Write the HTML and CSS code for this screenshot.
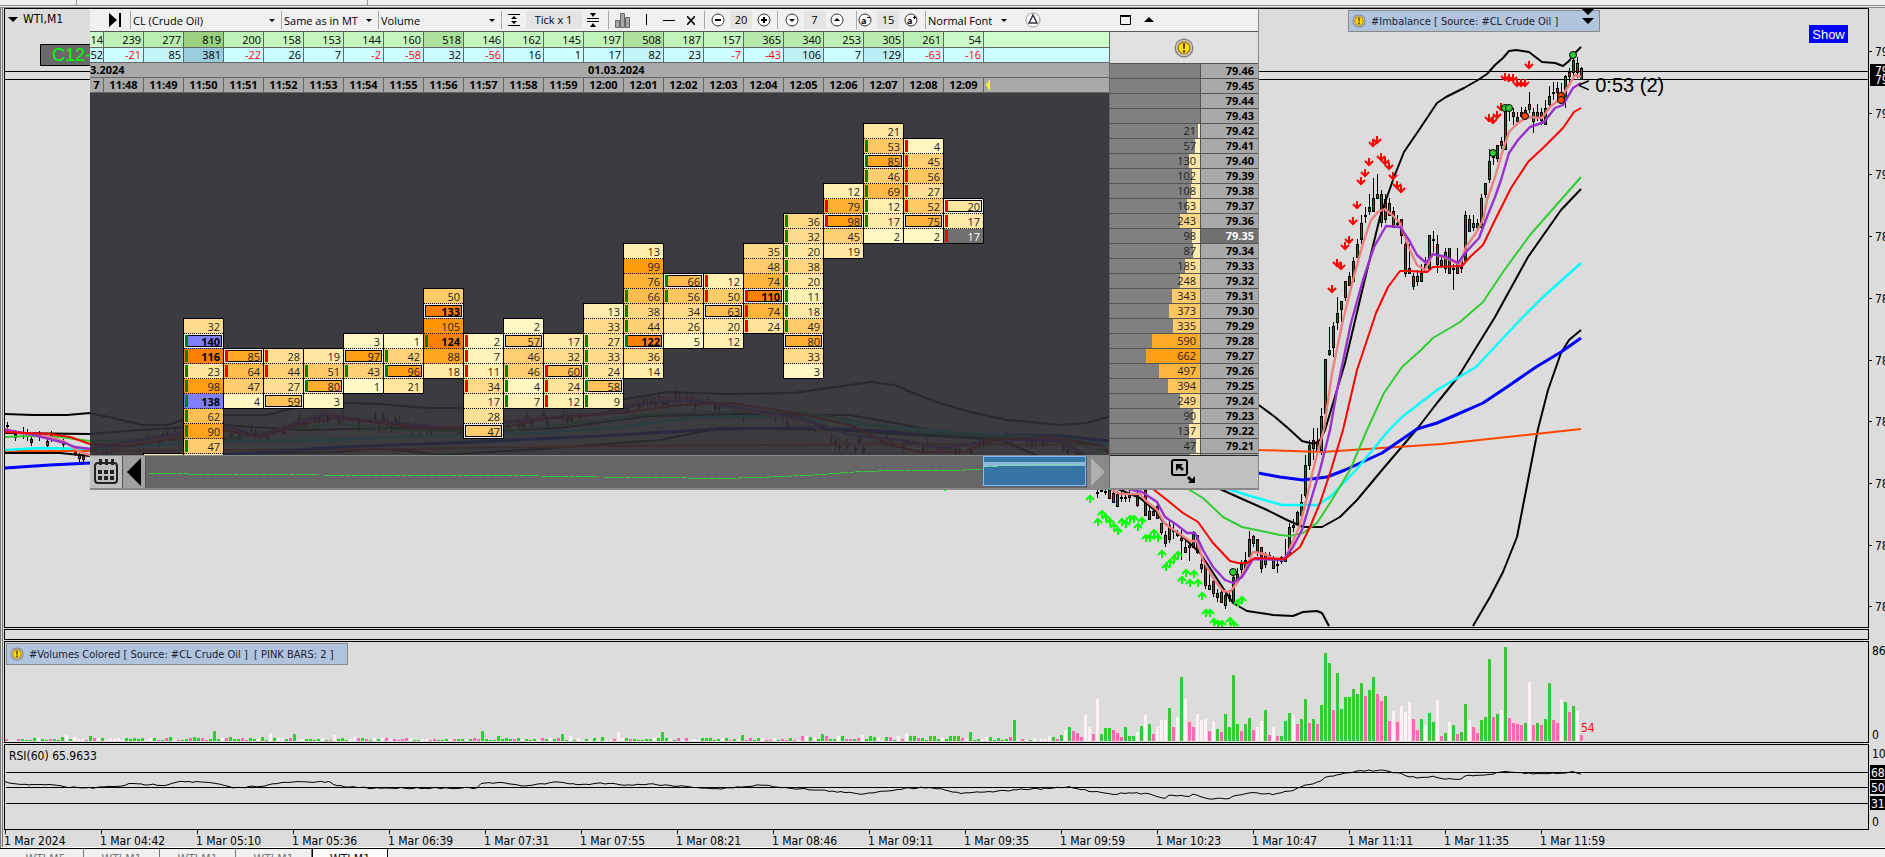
FILE: index.html
```
<!DOCTYPE html>
<html lang="en">
<head>
    <meta charset="UTF-8">
    <meta name="viewport" content="width=device-width, initial-scale=1.0">
    <title>WTI,M1</title>
    <link rel="stylesheet" href="styles.css">
</head>
<body>
    <svg class="defs" width="0" height="0" aria-hidden="true">
        <symbol id="warn" viewBox="0 0 18 18">
            <circle cx="9" cy="9" r="8.5" fill="#808080"/>
            <circle cx="9" cy="9" r="7.2" fill="#d8d8d8"/>
            <circle cx="9" cy="9" r="5.4" fill="#ffe000" stroke="#b08020" stroke-width="1.500"/>
            <path d="M8 5h2l-.4 5H8.400zM8 11h2v2H8z" fill="#403000"/>
        </symbol>
    </svg>

    <div class="topbar"><i></i><i></i></div>

    <main class="workspace">
        <section class="row row-main">
            <div class="plot" id="mainPlot">
                <svg class="layer"><g id="price" transform="translate(-5 -9)"></g></svg>

                <div class="symbol"><span class="tri-down"></span>WTI,M1</div>
                <button class="contract">C12-</button>

                <div class="tag tag-imbalance"><svg width="14" height="14"><use href="#warn"/></svg>#Imbalance [ Source: #CL Crude Oil ]</div>
                <svg class="marks" width="12" height="16"><path d="M0 0h12l-6 6zM0 9h12l-6 6z"/></svg>
                <button class="show">Show</button>
                <div class="countdown">&lt; 0:53 (2)</div>

                <div class="cluster">
                    <div class="toolbar">
                        <div class="group g-next">
                            <button aria-label="Go to last"><svg width="14" height="14"><path d="M1 0l8 7-8 7zM11 0h2v14h-2z"/></svg></button>
                        </div>
                        <div class="group g-symbol"><select aria-label="Instrument"><option>CL (Crude Oil)</option></select></div>
                        <div class="group g-period"><select aria-label="Period"><option>Same as in MT</option></select></div>
                        <div class="group g-mode"><select aria-label="Mode"><option>Volume</option></select></div>
                        <div class="group g-tick">
                            <button aria-label="Expand rows"><svg width="12" height="14"><path d="M0 1h12v1H0zM0 12h12v1H0zM6 3l3 3H3zM6 11l3-3H3z"/></svg></button>
                            <span class="value wide">Tick x 1</span>
                            <button aria-label="Collapse rows"><svg width="12" height="14"><path d="M0 5h12v1H0zM0 8h12v1H0zM3 0h6l-3 4zM3 14h6l-3-4z"/></svg></button>
                        </div>
                        <div class="group g-draw">
                            <button aria-label="Histogram"><svg width="16" height="15"><path d="M.5 7.500h4v7h-4zM5.500.5h4v14h-4zM10.500 4.500h4v10h-4z" fill="#a8a8a8" stroke="#666"/></svg></button>
                            <button aria-label="Vertical line"><svg width="8" height="12"><path d="M3 0h1v11H3z"/></svg></button>
                            <button aria-label="Horizontal line"><svg width="12" height="12"><path d="M0 6h12v1H0z"/></svg></button>
                            <button aria-label="Clear"><svg width="8" height="9"><path d="M0 0l8 9M8 0L0 9" stroke="#000" stroke-width="1.500"/></svg></button>
                        </div>
                        <div class="group g-step">
                            <button aria-label="Less"><svg width="14" height="14"><circle class="ring" cx="7" cy="7" r="6"/><path d="M4 6h6v2H4z"/></svg></button>
                            <span class="value">20</span>
                            <button aria-label="More"><svg width="14" height="14"><circle class="ring" cx="7" cy="7" r="6"/><path d="M4 6h6v2H4zM6 4h2v6H6z"/></svg></button>
                        </div>
                        <div class="group g-step g-rows">
                            <button aria-label="Down"><svg width="14" height="14"><circle class="ring" cx="7" cy="7" r="6"/><path d="M4 6h6L7 9z"/></svg></button>
                            <span class="value">7</span>
                            <button aria-label="Up"><svg width="14" height="14"><circle class="ring" cx="7" cy="7" r="6"/><path d="M4 8h6L7 5z"/></svg></button>
                        </div>
                        <div class="group g-step g-size">
                            <button aria-label="Smaller font"><svg width="14" height="14"><circle class="ring" cx="7" cy="7" r="6"/><text x="3" y="11">a</text><path d="M9 4h3v1H9z"/></svg></button>
                            <span class="value">15</span>
                            <button aria-label="Larger font"><svg width="14" height="14"><circle class="ring" cx="7" cy="7" r="6"/><text x="3" y="11">a</text><path d="M9 4h3v1H9zM10 3h1v3h-1z"/></svg></button>
                        </div>
                        <div class="group g-font"><select aria-label="Font"><option>Normal Font</option></select></div>
                        <button class="delta" aria-label="Delta"><svg width="16" height="16"><circle cx="8" cy="8" r="7" fill="#fff" stroke="#999"/><path d="M8 3l4 8H4z" fill="none" stroke="#334" stroke-width="1.500"/></svg></button>
                        <div class="winctl">
                            <button aria-label="Maximize"><svg width="12" height="12"><path d="M.5 1.500h10v9H.5z" fill="none" stroke="#000"/><path d="M0 1h11v2H0z"/></svg></button>
                            <button aria-label="Roll up"><svg width="10" height="6"><path d="M0 5h10L5 0z"/></svg></button>
                        </div>
                    </div>

                    <div class="cluster-body">
                        <div class="cluster-left">
                            <table class="head" id="head"></table>
                            <div class="footprint" id="footprint"></div>
                            <div class="nav">
                                <button class="cal" aria-label="Calendar">
                                    <svg width="24" height="26">
                                        <rect x="1" y="4" width="22" height="20" rx="3" fill="none" stroke="#222" stroke-width="2"/>
                                        <path d="M5 0h3v6H5zM11 0h3v6h-3zM17 0h3v6h-3z" fill="#222"/>
                                        <path d="M4 11h4v4H4zM10 11h4v4h-4zM16 11h4v4h-4zM4 17h4v4H4zM10 17h4v4h-4zM16 17h4v4h-4z" fill="#222"/>
                                    </svg>
                                </button>
                                <button class="back" aria-label="Back"><svg width="14" height="28"><path d="M14 0v28L0 14z"/></svg></button>
                                <div class="track">
                                    <svg width="837" height="30"><path d="M3 17h30l10 1h70l60 1h120l100 1 60 1h70l40 2 60-2 45-2 40-3 50-2h60l24-1" fill="none" stroke="#32cd32" stroke-dasharray="6 1" shape-rendering="crispEdges"/></svg>
                                    <div class="thumb"><svg width="100" height="12"><path d="M0 4.500h14v-1h30v-1h50" fill="none" stroke="#6fe0b0" stroke-dasharray="6 1"/></svg></div>
                                </div>
                                <button class="fwd" aria-label="Forward"><svg width="14" height="28"><path d="M0 0v28l14-14z" fill="#b0b0b0"/></svg></button>
                            </div>
                        </div>
                        <div class="cluster-right">
                            <div class="status"><svg width="20" height="20"><use href="#warn"/></svg></div>
                            <div class="ladder-wrap"><table class="ladder" id="ladder"></table></div>
                            <button class="resize" aria-label="Resize">
                                <svg width="26" height="26">
                                    <rect x="1" y="1" width="15" height="15" rx="2" fill="none" stroke="#000" stroke-width="2"/>
                                    <path d="M5 5h7l-2 2 3 3-2 2-3-3-3 3zM24 24h-7l2-2-3-3 2-2 3 3 3-3z"/>
                                </svg>
                            </button>
                        </div>
                    </div>
                </div>
            </div>
            <div class="axis"><svg class="layer"><g id="priceAxis" transform="translate(-1869 -8)"></g></svg></div>
        </section>

        <section class="row row-strip"><div class="plot"></div><div class="axis"></div></section>

        <section class="row row-volume">
            <div class="plot">
                <svg class="layer"><g id="volume" transform="translate(-5 -641)"></g></svg>
                <div class="tag tag-volume"><svg width="14" height="14"><use href="#warn"/></svg>#Volumes Colored [ Source: #CL Crude Oil ]&nbsp; [ PINK BARS: 2 ]</div>
            </div>
            <div class="axis"><svg class="layer"><g id="volumeAxis" transform="translate(-1869 -640)"></g></svg></div>
        </section>

        <section class="row row-rsi">
            <div class="plot">
                <svg class="layer"><g id="rsi" transform="translate(-5 -744)"></g></svg>
                <div class="rsi-label">RSI(60) 65.9633</div>
            </div>
            <div class="axis"><svg class="layer"><g id="rsiAxis" transform="translate(-1869 -743)"></g></svg></div>
        </section>

        <div class="times" id="times"></div>
    </main>

    <nav class="tabs">
        <button>WTI,M5</button>
        <button>WTI,M1</button>
        <button>WTI,M1</button>
        <button>WTI,M1</button>
        <button class="active">WTI,M1</button>
    </nav>

    <script src="script.js"></script>
</body>
</html>
```
FILE: styles.css
```
* {
    margin: 0;
    padding: 0;
    box-sizing: border-box;
}

body {
    display: flex;
    flex-direction: column;
    height: 100vh;
    overflow: hidden;
    background: #dcdcdc;
    color: #000;
    font-family: "DejaVu Sans Condensed", "DejaVu Sans", Tahoma, sans-serif;
    font-size: 12px;
}

button,
select {
    border: 0;
    background: none;
    color: inherit;
    font: inherit;
}

button {
    display: flex;
    align-items: center;
    justify-content: center;
}

svg {
    display: block;
}

.defs {
    position: absolute;
}

.topbar {
    display: flex;
    gap: 290px;
    height: 8px;
    padding-left: 76px;
    background: #f0f0f0;
    border-bottom: 3px double #888;
}

.topbar i {
    width: 1px;
    background: #999;
}

.workspace {
    display: flex;
    flex: 1;
    flex-direction: column;
    gap: 1px;
    min-height: 0;
    padding-left: 1px;
    border-left: 3px double #777;
    border-bottom: 1px solid #fff;
}

.row {
    display: flex;
    background: #dcdcdc;
}

.row-main {
    flex: 1;
    min-height: 0;
}

.row-strip {
    height: 11px;
}

.row-volume {
    height: 102px;
}

.row-rsi {
    height: 86px;
}

.plot {
    position: relative;
    flex: 1;
    overflow: hidden;
    border: 1px solid #000;
}

.axis {
    position: relative;
    width: 16px;
    overflow: hidden;
}

.layer {
    position: absolute;
    inset: 0;
    width: 100%;
    height: 100%;
}

.layer text {
    font-size: 12px;
}

.symbol {
    display: flex;
    gap: 5px;
    align-items: center;
    padding: 3px;
    line-height: 15px;
}

.tri-down {
    border: 5px solid transparent;
    border-top-color: #000;
    border-bottom: 0;
}

.contract {
    position: absolute;
    top: 35px;
    left: 35px;
    width: 80px;
    height: 22px;
    justify-content: flex-start;
    padding-left: 11px;
    border: 1px solid #000;
    background: #696969;
    color: #0f0;
    font: 18px "Liberation Sans", Arial, sans-serif;
}

.tag {
    display: flex;
    gap: 5px;
    align-items: center;
    width: max-content;
    height: 22px;
    padding: 0 5px 0 3px;
    border: 1px solid #888;
    background: #b0c4de;
    color: #223;
    font-size: 11px;
    white-space: pre;
}

.tag-imbalance {
    position: absolute;
    top: 1px;
    left: 1343px;
    width: 252px;
}

.tag-volume {
    position: relative;
    margin: 1px;
    width: 342px;
}

.marks {
    position: absolute;
    top: 0;
    left: 1577px;
}

.show {
    position: absolute;
    top: 16px;
    right: 20px;
    width: 39px;
    height: 18px;
    background: #00f;
    color: #fff;
    font: 13px "Liberation Sans", Arial, sans-serif;
}

.countdown {
    position: absolute;
    top: 65px;
    left: 1573px;
    font: 20px/22px "Liberation Sans", Arial, sans-serif;
}

/* floating cluster window */
.cluster {
    position: absolute;
    top: 0;
    left: 85px;
    width: 1169px;
    border-right: 1px solid #888;
    border-bottom: 2px solid #888;
    font-family: "Open Sans", "Noto Sans", sans-serif;
    font-size: 11px;
}

.toolbar {
    display: flex;
    height: 23px;
    background: #f0f0f0;
    border-bottom: 1px solid #555;
}

.group {
    display: flex;
    align-items: center;
    justify-content: space-between;
    height: 18px;
    margin-top: 2px;
    padding: 0 6px;
    border-left: 1px solid #aaa;
}

.group select {
    width: 100%;
    appearance: none;
}

.group:has(select) {
    padding: 0 6px 0 2px;
}

.group:has(select)::after {
    content: "";
    border: 3px solid transparent;
    border-top-color: #000;
    border-bottom: 0;
}

.g-next {
    width: 40px;
    padding-left: 18px;
    border-left: 0;
}

.g-symbol {
    width: 151px;
}

.g-period {
    width: 97px;
}

.g-mode {
    width: 123px;
}

.g-tick {
    width: 107px;
    padding-right: 9px;
}

.g-draw {
    width: 96px;
    padding-right: 9px;
}

.g-step {
    width: 73px;
}

.g-rows {
    width: 79px;
    padding: 0 12px 0 7px;
}

.g-size {
    width: 69px;
    padding: 0 7px 0 1px;
}

.g-font {
    width: 88px;
}

.ring {
    fill: #fff;
    stroke: #333;
}

.toolbar text {
    font: bold 9px "Open Sans", sans-serif;
}

.value {
    width: 22px;
    background: #e4e4e4;
    line-height: 18px;
    text-align: center;
}

.value.wide {
    width: 56px;
}

.delta {
    margin-left: 12px;
}

.winctl {
    display: flex;
    gap: 12px;
    width: 138px;
    margin-left: auto;
}

.cluster-body {
    display: flex;
}

.cluster-left {
    flex: 1;
    min-width: 0;
    border-right: 1px solid #666;
}

.head,
.ladder {
    width: 100%;
    border-spacing: 0;
    table-layout: fixed;
}

.head td,
.head th {
    height: 15px;
    padding: 0 2px;
    overflow: hidden;
    border-right: 1px solid #666;
    border-bottom: 1px solid #666;
    line-height: 14px;
    text-align: right;
    white-space: nowrap;
}

.head .volume td {
    height: 16px;
}

.head .date th {
    border-right: 0;
    text-align: left;
    padding: 0 4px;
}

.head th {
    background: #a9a9a9;
    text-align: center;
}

.head th:first-child,
.head td:first-child,
.head .date th:first-child {
    padding: 0;
}

.head .neg {
    color: #f00;
}

.head tr td:last-child,
.head tr th:last-child {
    border-right: 0;
}

.now {
    display: block;
    width: 4px;
    height: 12px;
    background: #ff0;
    clip-path: polygon(100% 0, 100% 100%, 0 50%);
}

.footprint {
    display: grid;
    grid-template-columns: 53px repeat(21, 40px);
    grid-template-rows: repeat(25, 15px);
    height: 362px;
    overflow: hidden;
    background: rgba(44, 44, 50, 0.92);
}

.column {
    margin: 0 -1px -1px 0;
    border: 1px solid #000;
}

.cell {
    display: flex;
    justify-content: flex-end;
    height: 15px;
    padding: 1px 3px 0 1px;
    border-bottom: 1px dotted #000;
    color: #222;
    line-height: 13px;
}

.cell:last-child {
    height: 14px;
    border-bottom: 0;
}

.cell.buy::before,
.cell.sell::before {
    content: "";
    width: 3px;
    height: 12px;
    margin-right: auto;
    background: #008000;
}

.cell.sell::before {
    background: #e00;
}

.cell.max {
    box-shadow: inset 0 0 0 1px #eee, inset 0 0 0 2px #000;
}

.cell.strong {
    color: #000;
    font-weight: bold;
}

.nav {
    display: flex;
    height: 33px;
    border-top: 1px solid #888;
    background: #666;
}

.cal {
    width: 33px;
    background: #c0c0c0;
    border-right: 1px solid #555;
}

.back {
    width: 23px;
    background: #a0a0a0;
    border-right: 1px solid #555;
}

.fwd {
    width: 23px;
    background: #888;
    border-left: 1px solid #555;
}

.track {
    display: flex;
    flex: 1;
    min-width: 0;
}

.thumb {
    width: 103px;
    height: 30px;
    padding-top: 5px;
    border: 1px solid #80b8f8;
    background: linear-gradient(#3674a4 5px, #90b8d8 5px, #90b8d8 9px, #3674a4 9px);
}

.cluster-right {
    width: 148px;
}

.status {
    display: flex;
    align-items: center;
    justify-content: center;
    height: 31px;
    background: #e0e0e0;
}

.ladder-wrap {
    height: 392px;
    overflow: hidden;
}

.ladder td,
.ladder th {
    height: 15px;
    border-top: 1px solid #555;
    line-height: 14px;
    text-align: right;
}

.ladder td {
    border-right: 1px solid #555;
    background: #808080;
    color: #222;
}

.ladder th {
    padding-right: 4px;
    background: #a9a9a9;
}

.ladder .current th {
    background: #707070;
    color: #fff;
}

/* the bar sits under the number, both flush right */
.level {
    display: grid;
    justify-items: end;
    height: 14px;
}

.level i,
.level span {
    grid-area: 1 / 1;
}

.level i {
    height: 14px;
}

.level span {
    z-index: 1;
    padding-right: 4px;
}

.resize {
    width: 100%;
    height: 33px;
    border-top: 1px solid #222;
    background: #c0c0c0;
}

.rsi-label {
    position: relative;
    padding: 4px;
    line-height: 15px;
}

.times {
    display: flex;
    height: 17px;
    margin-top: -1px;
}

.times span {
    flex: none;
    width: 96px;
    line-height: 15px;
    white-space: nowrap;
}

.times span::before {
    content: "";
    display: block;
    width: 1px;
    height: 4px;
    margin-left: 1px;
    background: #000;
}

.tabs {
    display: flex;
    height: 9px;
    overflow: hidden;
    padding-left: 8px;
    border-top: 1px solid #000;
    background: #f0f0f0;
    color: #777;
}

.tabs button {
    width: 76px;
    height: 20px;
    border-right: 1px solid #777;
}

.tabs .active {
    margin-top: -1px;
    padding-top: 1px;
    background: #fff;
    border-left: 1px solid #000;
    border-right: 1px solid #000;
    color: #000;
}
```
FILE: script.js
```
const byId = id => document.getElementById(id);

// Small repeatable noise source for the quiet part of the session.
let seed = 7;
function rnd() {
    seed = (seed * 16807) % 2147483647;
    return seed / 2147483647;
}

/* ---------- cluster header ---------- */
const volumes = [14, 239, 277, 819, 200, 158, 153, 144, 160, 518, 146, 162, 145, 197, 508, 187, 157, 365, 340, 253, 305, 261, 54];
const deltas = [52, -21, 85, 381, -22, 26, 7, -2, -58, 32, -56, 16, 1, 17, 82, 23, -7, -43, 106, 7, 129, -63, -16];
const minutes = ['7', '11:48', '11:49', '11:50', '11:51', '11:52', '11:53', '11:54', '11:55', '11:56', '11:57', '11:58', '11:59',
    '12:00', '12:01', '12:02', '12:03', '12:04', '12:05', '12:06', '12:07', '12:08', '12:09'];

function volumeColor(v) {
    const k = Math.min(v / 819, 1);
    return `rgb(${204 - 52 * k}, ${255 - 47 * k}, ${204 - 76 * k})`;
}

function deltaColor(v) {
    const k = Math.max(v, 0) / 381;
    return `rgb(${204 - 52 * k}, ${255 - 50 * k}, ${255 - 31 * k})`;
}

byId('head').innerHTML =
    '<colgroup><col style="width:14px">' + '<col style="width:40px">'.repeat(22) + '<col></colgroup>' +
    '<tr class="volume">' + volumes.map(v => `<td style="background:${volumeColor(v)}">${v}</td>`).join('') + '<td style="background:#cfc"></td></tr>' +
    '<tr>' + deltas.map(v => `<td class="${v < 0 ? 'neg' : ''}" style="background:${deltaColor(v)}">${v}</td>`).join('') + '<td style="background:#cff"></td></tr>' +
    '<tr class="date"><th colspan="13">3.2024</th><th colspan="11">01.03.2024</th></tr>' +
    '<tr>' + minutes.map(m => `<th>${m}</th>`).join('') + '<th><span class="now"></span></th></tr>';

/* ---------- footprint: [first price row, cells]; g/r side mark, * peak, p purple, x current, - no number ---------- */
const columns = [
    [26, '18-'],
    [17, '32 140g*p 116g 23g 98g 138gp 62g 90g 47g 9-'],
    [19, '85r* 64r 47 4'],
    [19, '28r 44r 27 59*'],
    [19, '19 51g 80g* 3'],
    [18, '3 97* 43g 1'],
    [18, '1 42g 96g* 21'],
    [15, '50 133* 105 124g 88 18'],
    [18, '2r 7r 11r 34r 17 28 47*'],
    [17, '2 57* 46 46g 4g 7g'],
    [18, '17 32 60r* 24r 12r'],
    [16, '13 33 27g 33g 24g 58g* 9g'],
    [12, '13 99 76 66g 38g 44g 122g* 36 14'],
    [14, '66g* 56g 34 26 5'],
    [14, '12r 50r 63* 20 12'],
    [12, '35 48 74 110r* 74r 24r'],
    [10, '36g 32g 20g 38g 20g 11g 18g 49g 80* 33 3'],
    [8, '12 79r 98r* 45 19'],
    [4, '21 53g 85g* 46g 69g 12g 17g 2'],
    [5, '4r 45r 56r 27r 52r 75* 2'],
    [9, '20r* 17r 17rx']
];

function heat(v) {
    if (v >= 110) return '#ff8000';
    return `rgb(255, ${Math.round(250 - 0.95 * v)}, ${Math.max(0, Math.round(200 - 1.9 * v))})`;
}

byId('footprint').innerHTML = columns.map(([start, list], i) => {
    const cells = list.split(' ');
    const html = cells.map(c => {
        const v = parseInt(c, 10);
        let cls = 'cell';
        let color = heat(v);
        if (c.includes('g')) cls += ' buy';
        if (c.includes('r')) cls += ' sell';
        if (c.includes('*')) cls += ' max';
        if (v >= 110) cls += ' strong';
        if (c.includes('p')) color = '#8080ff';
        const text = c.includes('x') ? ';color:#fff' : '';
        if (text) color = '#707070';
        return `<div class="${cls}" style="background:${color}${text}">${c.includes('-') ? '' : v}</div>`;
    }).join('');
    return `<div class="column" style="grid-column:${i + 2};grid-row:${start - 1} / span ${cells.length}">${html}</div>`;
}).join('');

/* ---------- price ladder ---------- */
const levels = [0, 0, 0, 0, 21, 57, 130, 102, 108, 163, 243, 98, 87, 185, 248, 343, 373, 335, 590, 662, 497, 394, 249, 90, 137, 47, 120];
byId('ladder').innerHTML = '<colgroup><col style="width:91px"><col></colgroup>' + levels.map((v, i) => {
    const color = `rgb(255, ${Math.round(247 - 0.131 * v)}, ${Math.round(200 - 0.275 * v)})`;
    const cut = i === levels.length - 1;
    const bar = v ? `<i style="width:${Math.round(v * 0.082)}px;background:${color}"></i><span>${cut ? '' : v}</span>` : '';
    return `<tr class="${i === 11 ? 'current' : ''}"><td><div class="level">${bar}</div></td><th>${cut ? '' : (79.46 - i / 100).toFixed(2)}</th></tr>`;
}).join('');

/* ---------- price chart ---------- */
const line = (pts, color, width = 2.4) =>
    `<polyline points="${pts}" fill="none" stroke="${color}" stroke-width="${width}" stroke-linejoin="round"/>`;

const salmon = '5,429 20,433 50,437 65,442 80,452 90,455 150,440 223,430 260,436 290,424 325,412 370,421 450,428 530,418 600,414 640,400 690,397 740,410 800,420 850,445 900,440 940,450 1000,440 1060,440 1112,490 1120,494 1140,494 1145,500 1157,510 1165,524 1177,532 1190,541 1197,541 1203,560 1213,578 1223,591 1230,592 1237,583 1245,570 1253,552 1260,553 1267,555 1273,559 1285,559 1290,548 1300,525 1307,497 1313,470 1324,429 1332,373 1343,320 1353,280 1363,243 1371,220 1378,212 1385,209 1392,215 1400,223 1409,248 1417,265 1425,270 1433,254 1446,258 1460,265 1466,247 1476,233 1483,220 1487,200 1495,177 1503,150 1509,132 1518,123 1528,117 1542,118 1550,107 1561,98 1569,85 1575,75 1581,77';
const purple = '5,430 30,434 65,443 75,447 90,449 150,438 223,426 260,436 290,426 325,415 370,421 450,428 530,420 600,414 640,404 690,400 740,408 800,418 850,435 900,440 940,448 1000,440 1060,440 1110,470 1128,489 1142,492 1157,502 1165,517 1177,525 1187,533 1195,533 1203,550 1213,567 1225,580 1233,583 1242,577 1253,559 1283,560 1293,547 1302,530 1310,503 1320,470 1330,430 1337,390 1351,323 1363,280 1374,247 1386,226 1400,227 1409,240 1417,255 1426,263 1433,254 1446,257 1458,263 1466,252 1479,238 1487,217 1495,197 1501,180 1509,153 1518,140 1530,127 1544,122 1555,108 1563,105 1573,88 1581,83';

const averages = [
    ['5,414 33,415 67,415 90,413 113,418 143,425 167,425 183,420 223,415 267,415 293,408 347,403 380,404 427,408 503,408 626,399 668,392 725,394 794,393 829,388 871,382 894,385 936,402 970,412 1007,420 1060,425 1087,423 1108,417 1150,400 1200,390 1256,403 1275,417 1289,429 1302,441 1314,444 1320,440 1325,430 1345,363 1363,287 1380,217 1394,177 1404,152 1421,127 1437,103 1446,97 1464,88 1478,80 1487,74 1495,65 1503,58 1509,51 1516,50 1529,52 1542,62 1555,63 1563,66 1569,61 1575,53 1581,47', '#000', 2],
    ['5,433 90,434 140,430 223,425 300,430 400,428 500,431 560,428 650,416 740,414 850,415 900,424 960,436 1050,441 1110,445 1160,465 1220,489 1240,498 1267,510 1287,520 1303,527 1322,527 1340,517 1357,500 1382,470 1417,429 1437,403 1458,377 1495,317 1528,257 1561,210 1581,189', '#000', 2],
    ['5,453 60,453 90,456 340,452 370,449 400,450 440,455 540,449 660,440 720,428 830,430 1000,440 1060,465 1118,489 1140,498 1157,512 1163,522 1183,537 1200,553 1223,588 1233,603 1247,611 1273,615 1293,616 1303,612 1317,611 1322,613 1329,626', '#000', 2],
    ['1473,626 1490,597 1503,572 1517,537 1530,470 1538,429 1548,390 1561,353 1569,340 1581,330', '#000', 2],
    ['5,451 90,451 400,449 600,446 900,444 1110,445 1259,450 1322,452 1442,444 1581,429', '#ff4500', 2],
    ['5,468 50,465 90,463 223,455 340,447 450,443 600,436 720,429 820,428 960,435 1060,436 1110,441 1258,473 1280,477 1303,480 1327,477 1345,470 1382,453 1417,429 1437,423 1458,414 1483,403 1507,387 1536,367 1561,352 1581,338', '#00f', 3],
    ['5,450 40,448 90,449 223,441 330,440 400,437 540,433 620,427 700,417 780,416 860,424 960,433 1060,438 1110,445 1170,465 1228,489 1247,495 1282,505 1317,505 1330,497 1356,470 1389,430 1402,417 1437,390 1476,367 1520,320 1542,298 1581,263', '#0ff'],
    ['5,437 30,436 60,437 90,441 150,440 223,440 290,428 340,424 400,430 500,432 560,425 640,415 700,412 800,412 850,420 900,431 1000,437 1060,440 1120,455 1188,489 1203,498 1223,517 1242,527 1280,535 1290,536 1303,533 1317,523 1330,503 1350,470 1367,430 1384,393 1402,367 1421,350 1433,338 1460,322 1483,302 1503,272 1530,235 1552,210 1581,177', '#32cd32', 2],
    [salmon, '#f08080'],
    [purple, '#9932cc'],
    ['5,432 50,434 70,437 90,444 130,446 180,438 223,430 260,437 300,425 335,418 370,422 420,428 500,428 550,418 620,413 680,405 730,403 790,412 850,425 890,445 920,452 965,452 990,440 1050,437 1100,445 1153,489 1167,500 1183,513 1198,522 1213,543 1230,561 1238,563 1247,563 1255,558 1285,559 1300,547 1310,527 1320,503 1331,470 1343,430 1357,370 1376,313 1388,287 1400,271 1409,271 1427,272 1433,267 1462,266 1470,257 1483,245 1495,220 1511,188 1528,162 1544,147 1563,128 1574,112 1581,108', '#f00', 2]
];

// x, high, body top, body bottom, low, direction
const candles = `1097 488 492 493 498 g;1101 488 490 491 492 g;1105 489 491 492 495 g;1109 488 490 498 498 r;1113 489 493 502 502 r;1117 491 494 506 506 g;1121 490 497 498 502 r;1125 493 497 498 502 g;1129 490 495 497 502 r;1137 492 495 505 507 r;1145 490 490 515 515 r;1149 507 511 519 520 g;1153 506 511 515 516 g;1157 505 506 518 518 r;1161 523 523 532 535 r;1165 531 535 543 547 r;1169 520 525 539 543 g;1173 523 530 531 539 r;1177 530 532 535 537 g;1181 530 538 540 560 r;1185 538 547 552 553 r;1189 540 545 547 561 r;1193 531 532 547 547 g;1197 535 535 552 554 r;1201 555 564 568 573 r;1205 564 564 585 589 r;1209 573 585 589 590 g;1213 580 581 593 597 r;1217 589 593 597 602 g;1221 588 592 602 602 r;1225 593 595 605 609 g;1229 590 595 598 602 g;1233 573 577 602 603 g;1237 568 574 580 583 g;1241 560 564 569 577 g;1245 552 560 569 569 g;1249 531 539 556 557 g;1253 535 536 543 547 g;1257 539 539 552 556 r;1261 547 547 568 573 r;1265 552 555 564 568 g;1269 552 555 557 560 r;1273 556 559 568 569 r;1277 560 564 565 573 g;1281 556 557 561 564 g;1285 539 557 561 561 g;1289 523 527 553 553 g;1293 519 525 527 532 g;1297 511 512 523 523 g;1301 494 502 515 515 g;1305 455 465 495 498 g;1309 440 445 465 470 g;1313 428 440 448 460 g;1317 428 442 450 455 g;1321 408 416 450 455 g;1325 359 359 413 420 g;1329 327 350 354 356 g;1333 322 326 347 357 g;1337 297 313 322 330 g;1341 301 301 309 322 g;1345 281 281 297 301 g;1349 272 276 285 285 g;1353 257 261 281 281 g;1357 239 244 257 257 g;1361 215 223 239 244 g;1365 207 215 216 223 g;1369 194 207 211 215 g;1373 178 198 211 211 g;1377 174 194 198 198 r;1381 190 194 222 227 r;1385 194 199 219 223 g;1389 198 203 215 215 r;1393 207 211 227 227 r;1397 215 223 224 226 g;1401 219 219 235 244 r;1405 242 244 273 277 r;1409 244 268 273 273 r;1413 273 276 286 290 r;1417 270 276 281 286 g;1421 264 273 281 281 g;1425 257 264 268 273 g;1429 235 235 268 268 g;1433 231 239 240 252 g;1437 235 244 264 273 r;1441 257 260 265 268 r;1445 248 252 268 273 g;1449 248 248 273 273 r;1453 264 268 269 290 g;1457 248 264 273 273 r;1461 256 260 268 273 g;1465 211 215 260 260 g;1469 215 219 231 231 r;1473 215 223 227 231 g;1477 219 223 227 231 g;1481 194 198 227 227 g;1485 183 183 194 198 g;1489 149 161 179 183 g;1493 149 153 157 165 g;1497 145 145 158 162 g;1501 137 141 145 149 r;1505 109 109 149 149 g;1509 107 108 109 121 g;1513 108 112 116 125 r;1517 112 117 121 121 g;1521 107 112 116 117 g;1525 107 110 118 120 r;1529 92 104 109 113 r;1533 108 112 121 133 r;1537 104 112 117 121 g;1541 108 112 120 125 r;1545 100 108 124 125 g;1549 86 96 104 108 g;1553 82 92 93 100 g;1557 82 88 92 100 r;1561 83 92 100 104 r;1565 75 76 100 108 g;1569 68 72 76 83 r;1573 57 60 72 78 g;1577 57 63 72 78 r;1581 67 68 79 79 r`
    .split(';').map(c => c.split(' '));

// quiet hours: short candles scattered round the fast average
const track = salmon.split(' ').map(p => p.split(',').map(Number));
for (let x = 7; x < 1095; x += 4) {
    const n = track.findIndex(p => p[0] > x);
    const [x0, y0] = track[n - 1];
    const [x1, y1] = track[n];
    const y = Math.round(y0 + (y1 - y0) * (x - x0) / (x1 - x0) + (rnd() - 0.5) * 10);
    if (rnd() > 0.55) candles.push([x, y - 2 - Math.round(rnd() * 4), y, y + Math.round(rnd() * 5), y + 7, rnd() > 0.5 ? 'g' : 'r']);
}

const candle = ([x, hi, top, bot, lo, dir]) =>
    `<path d="M${+x + 0.5} ${hi}V${lo}" stroke="#000"/>` +
    `<rect x="${x - 0.5}" y="${+top + 0.5}" width="2" height="${Math.max(bot - top, 0)}" fill="${dir === 'g' ? '#0a7a0a' : '#e01010'}" stroke="#000"/>`;

const sells = '1332,289 1337,263 1341,266 1345,246 1349,240 1353,221 1357,205 1361,181 1365,173 1369,162 1373,143 1377,140 1381,157 1385,161 1389,166 1393,176 1397,185 1401,189 1489,118 1493,120 1497,115 1501,107 1505,77 1509,78 1513,78 1517,83 1521,83 1525,83 1529,65';
const buys = '945,487 1090,499 1098,522 1102,514 1106,518 1110,522 1114,527 1118,531 1122,522 1126,524 1130,519 1134,519 1138,527 1142,521 1146,538 1150,538 1154,533 1158,538 1162,554 1166,567 1170,563 1174,559 1178,555 1182,580 1186,573 1190,583 1194,574 1198,583 1202,596 1206,613 1210,613 1214,622 1218,624 1222,624 1230,621 1234,625 1238,603 1242,600';
const arrows = (list, d, color) => list.split(' ').map(p =>
    `<path transform="translate(${p})" d="${d}" fill="none" stroke="${color}" stroke-width="2"/>`).join('');

const dots = [[1573, 55, 'g'], [1505, 108, 'g'], [1509, 108, 'g'], [1493, 153, 'g'], [1233, 572, 'g'], [1525, 116], [1561, 96], [1561, 100]];

byId('price').innerHTML =
    '<path d="M5 71.5H4000M5 79.5H4000" stroke="#000"/>' +
    candles.map(candle).join('') +
    averages.map(a => line(...a)).join('') +
    arrows(sells, 'M0-4V3M-4-1L0 3L4-1', '#f00') +
    arrows(buys, 'M0 4V-3M-4 1L0-3L4 1', '#0f0') +
    dots.map(d => `<circle cx="${d[0]}" cy="${d[1]}" r="3.5" fill="${d[2] ? '#32cd32' : '#ff4500'}" stroke="#000"/>`).join('');

let axis = '';
for (let i = 0; i < 10; i++) {
    const y = Math.round(51 + 61.7 * i);
    axis += `<path d="M1869 ${y + 0.5}h3" stroke="#000"/><text x="1875" y="${y + 5}">${i < 3 ? 79 : 78}</text>`;
}
axis += '<rect x="1870" y="64" width="40" height="22"/><text x="1875" y="75" fill="#fff">79</text><text x="1875" y="84" fill="#fff">79</text>';
byId('priceAxis').innerHTML = axis;

/* ---------- volumes ---------- */
const busy = 'w2 w2 w5 g4 p2 g6 w11 g14 p10 p8 p4 w26 w14 p7 w42 g7 g13 g13 p11 p8 p4 g14 g5 g5 w9 g15 w26 g17 p7 w14 w21 w21 g33 p14 w24 g64 w42 p19 p14 w27 w21 w22 p10 w20 g12 p9 g27 g14 g66 g17 p10 g17 g23 p11 w14 w20 g31 p6 w14 p5 g5 g20 g28 w26 p17 g22 g42 p18 g22 p17 g36 g88 g78 p31 g68 g32 g44 g44 g52 g47 g58 p45 g51 g64 p47 p40 g45 p20 w30 p19 w35 w29 w39 p22 p11 g22 w16 g28 g19 w41 p5 g8 w19 g16 p7 g9 g37 w21 p14 p8 g21 g24 g82 p24 g27 w31 g94 p23 p18 p17 p16 g18 w59 p16 g18 p16 g22 g58 p21 p18 w42 g39 p29 g35 w30 p6'.split(' ');
const spikes = { 61: 'g4', 65: 'w6', 73: 'w4', 89: 'g5', 169: 'g4', 193: 'g4', 213: 'g10', 229: 'g4', 261: 'g4', 269: 'w8', 293: 'g7', 333: 'w6', 353: 'w4', 481: 'g10', 497: 'g5', 561: 'g7', 569: 'w5', 601: 'g4', 617: 'w9', 661: 'g9', 741: 'g6', 821: 'g7', 861: 'w6', 905: 'w8', 933: 'g5', 969: 'g9', 1013: 'g21' };
const barColor = { g: '#32cd32', p: '#ff69b4', w: '#fff0f5' };
const bars = [];
const firstBusy = 1580 - (busy.length - 1) * 4;
for (let x = 5; x < firstBusy - 3; x += 4) {
    const kind = 'gpwg'[Math.floor(rnd() * 4)];
    bars.push([x, spikes[x] || kind + (1 + Math.floor(rnd() * (x > 800 ? 5 : 3)))]);
}
busy.forEach((b, i) => bars.push([firstBusy + i * 4, b]));
byId('volume').innerHTML = bars.map(([x, b]) => {
    const h = +b.slice(1);
    return `<rect x="${x}" y="${740 - h}" width="3" height="${h}" fill="${barColor[b[0]]}"/>`;
}).join('') + '<text x="1581" y="731" fill="#f00">54</text>';
byId('volumeAxis').innerHTML = '<text x="1872" y="654">86</text><text x="1872" y="738">0</text>';

/* ---------- rsi ---------- */
const rsi = '5,781 20,784 40,783 60,785 64,786 90,787 120,785 130,783 165,784 180,780 213,782 225,785 235,787 260,785 290,781 330,781 336,785 370,787 440,787 478,787 482,782 505,782 520,785 560,781 580,784 600,782 630,784 650,783 720,788 760,784 790,787 830,790 860,793 900,788 930,786 960,792 1000,790 1030,788 1040,788 1070,786 1090,790 1115,793 1130,792 1150,793 1165,797 1170,794 1190,795 1195,793 1205,797 1218,798 1230,797 1235,795 1252,791 1260,793 1275,793 1295,789 1302,785 1320,781 1326,776 1340,773 1357,770 1386,769 1395,772 1402,773 1407,776 1425,777 1433,775 1445,778 1460,778 1465,775 1485,774 1505,771 1540,773 1560,772 1575,771 1582,773'
    .split(' ').map(p => p.split(',').map(Number));
const rsiPoints = [];
for (let x = 5; x < 1582; x += 4) {
    const n = rsi.findIndex(p => p[0] > x);
    const [x0, y0] = rsi[n - 1];
    const [x1, y1] = rsi[n];
    rsiPoints.push(`${x},${(y0 + (y1 - y0) * (x - x0) / (x1 - x0) + (rnd() - 0.5) * 1.4).toFixed(1)}`);
}
byId('rsi').innerHTML = '<path d="M6 771.5H4000M6 786.5H4000M6 802.5H4000" stroke="#000"/>' + line(rsiPoints.join(' '), '#000', 1);
byId('rsiAxis').innerHTML = '<text x="1872" y="757">10</text><text x="1872" y="825">0</text>' +
    [[771, 68], [786, 50], [802, 31]].map(([y, v]) =>
        `<rect x="1870" y="${y - 7}" width="40" height="14"/><text x="1871" y="${y + 5}" fill="#fff">${v}</text>`).join('');

/* ---------- time scale ---------- */
byId('times').innerHTML = ['2024', '04:42', '05:10', '05:36', '06:39', '07:31', '07:55', '08:21', '08:46', '09:11', '09:35', '09:59', '10:23', '10:47', '11:11', '11:35', '11:59']
    .map(t => `<span>1 Mar ${t}</span>`).join('');
```
